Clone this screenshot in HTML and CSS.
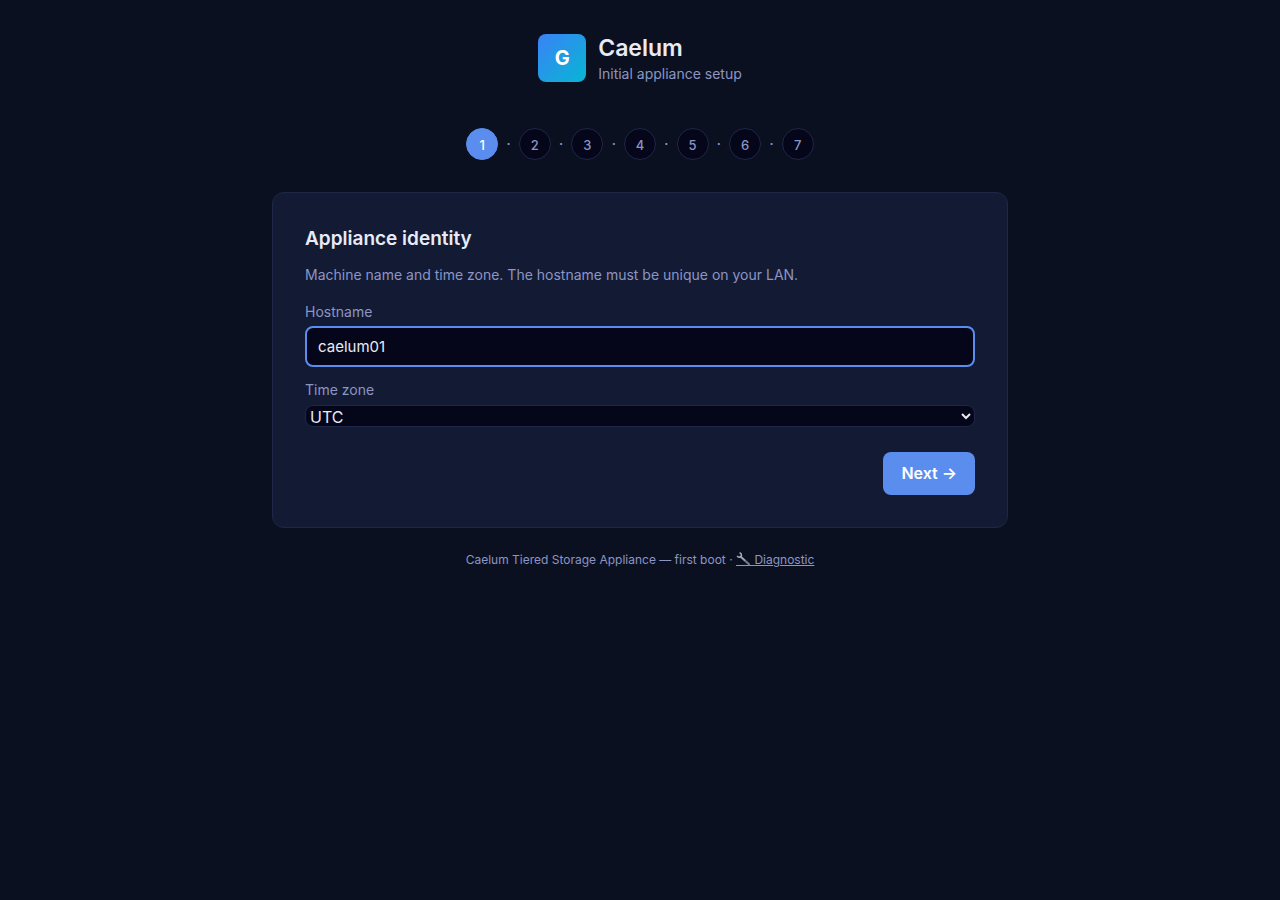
FILE: index.html
```html
<!DOCTYPE html>
<html lang="en">
<head>
<meta charset="utf-8">
<meta name="viewport" content="width=device-width, initial-scale=1">
<title>Caelum setup</title>
<link rel="stylesheet" href="styles.css">
</head>
<body>
<div class="wizard">
  <header class="brand">
    <div class="logo">G</div>
    <div>
      <h1 class="brand-name">Caelum</h1>
      <p class="brand-sub">Initial appliance setup</p>
    </div>
  </header>
  <div class="steps">
    <span class="step active">1</span><span>·</span>
    <span class="step">2</span><span>·</span>
    <span class="step">3</span><span>·</span>
    <span class="step">4</span><span>·</span>
    <span class="step">5</span><span>·</span>
    <span class="step">6</span><span>·</span>
    <span class="step">7</span>
  </div>
  <main class="card">
    <form>
      <h2 class="card-title">Appliance identity</h2>
      <p class="lead">Machine name and time zone. The hostname must be unique on your LAN.</p>
      <label class="label" for="hostname">Hostname</label>
      <input class="input" id="hostname" type="text" value="caelum01">
      <label class="label" for="tz">Time zone</label>
      <select class="select" id="tz"><option>UTC</option></select>
      <div class="actions"><button class="next" type="button">Next →</button></div>
    </form>
  </main>
  <footer class="foot">Caelum Tiered Storage Appliance — first boot · <a class="diag" href="#"><svg class="wrench" viewBox="0 0 15 14" aria-hidden="true"><path d="M0 13.5H15" stroke="currentColor"/><path d="M5.5 5.5 13 12.2" stroke="#79777f" stroke-width="2.2" stroke-linecap="round"/><path d="M4 4 9 8.5" stroke="#a5a9b2" stroke-width="1.5"/><path d="M3.6.8C5.3 1.3 5.8 3 5.2 4.5 4.3 5.6 2.2 5.6 1.2 3.9" fill="none" stroke="#a9adb8" stroke-width="1.5"/></svg> Diagnostic</a></footer>
</div>
</body>
</html>
```
FILE: styles.css
```css
* { box-sizing: border-box; }
body {
  margin: 0;
  min-height: 100vh;
  background: #0b1020;
  color: #e8eaf6;
  font: 16px/24px Inter, "Liberation Sans", sans-serif;
}
h1, h2, p { margin: 0; }
.wizard { max-width: 736px; margin: 0 auto; padding: 32px 0; }
.brand { display: flex; justify-content: center; align-items: center; gap: 12px; }
.logo {
  display: grid;
  place-items: center;
  width: 48px;
  height: 48px;
  border-radius: 8px;
  background: linear-gradient(135deg, #3b82f6, #06b6d4);
  color: #fff;
  font-size: 20px;
  font-weight: 700;
}
.brand-name { padding-top: 1px; font-size: 23px; line-height: 30px; font-weight: 600; }
.brand-sub { color: #8c95c4; font-size: 14px; line-height: 21px; }
.steps {
  display: flex;
  justify-content: center;
  align-items: center;
  gap: 8px;
  margin: 44px 0 32px;
  color: #8c95c4;
  font-size: 16px;
}
.step {
  display: grid;
  place-items: center;
  width: 32px;
  height: 32px;
  padding-top: 1px;
  border: 1px solid #1f2747;
  border-radius: 50%;
  background: #05061a;
  font-size: 13px;
  font-weight: 500;
}
.step.active { background: #5b8def; border-color: #5b8def; color: #fff; }
.card {
  padding: 32px;
  border: 1px solid #1f2747;
  border-radius: 12px;
  background: #131a33;
}
.card-title { font-size: 19px; line-height: 28px; font-weight: 600; }
.lead { margin: 12px 0 16px; color: #8c95c4; font-size: 14px; line-height: 20px; }
.label { display: block; margin-bottom: 4px; color: #8c95c4; font-size: 14px; line-height: 21px; }
.input {
  display: block;
  width: 100%;
  height: 41px;
  margin-bottom: 12px;
  padding: 0 11px;
  border: 2px solid #5b8def;
  border-radius: 8px;
  outline: 0;
  background: #05061a;
  color: #e8eaf6;
  font: 15px/20px Inter, "Liberation Sans", sans-serif;
}
.select {
  display: block;
  width: 100%;
  height: 22px;
  margin-top: 5px;
  padding-bottom: 1px;
  border: 1px solid #1f2747;
  border-radius: 8px;
  background: #05061a;
  color: #e8eaf6;
  font: 16px/20px Inter, "Liberation Sans", sans-serif;
}
.actions { display: flex; justify-content: flex-end; margin-top: 25px; }
.next {
  padding: 11px 18px;
  border: 0;
  border-radius: 8px;
  background: #5b8def;
  color: #fff;
  font: 600 16px/21px Inter, "Liberation Sans", sans-serif;
}
.foot { margin-top: 22px; color: #8c95c4; font-size: 12px; line-height: 20px; text-align: center; }
.diag { color: inherit; }
.wrench { width: 15px; height: 14px; vertical-align: -2px; }
```
